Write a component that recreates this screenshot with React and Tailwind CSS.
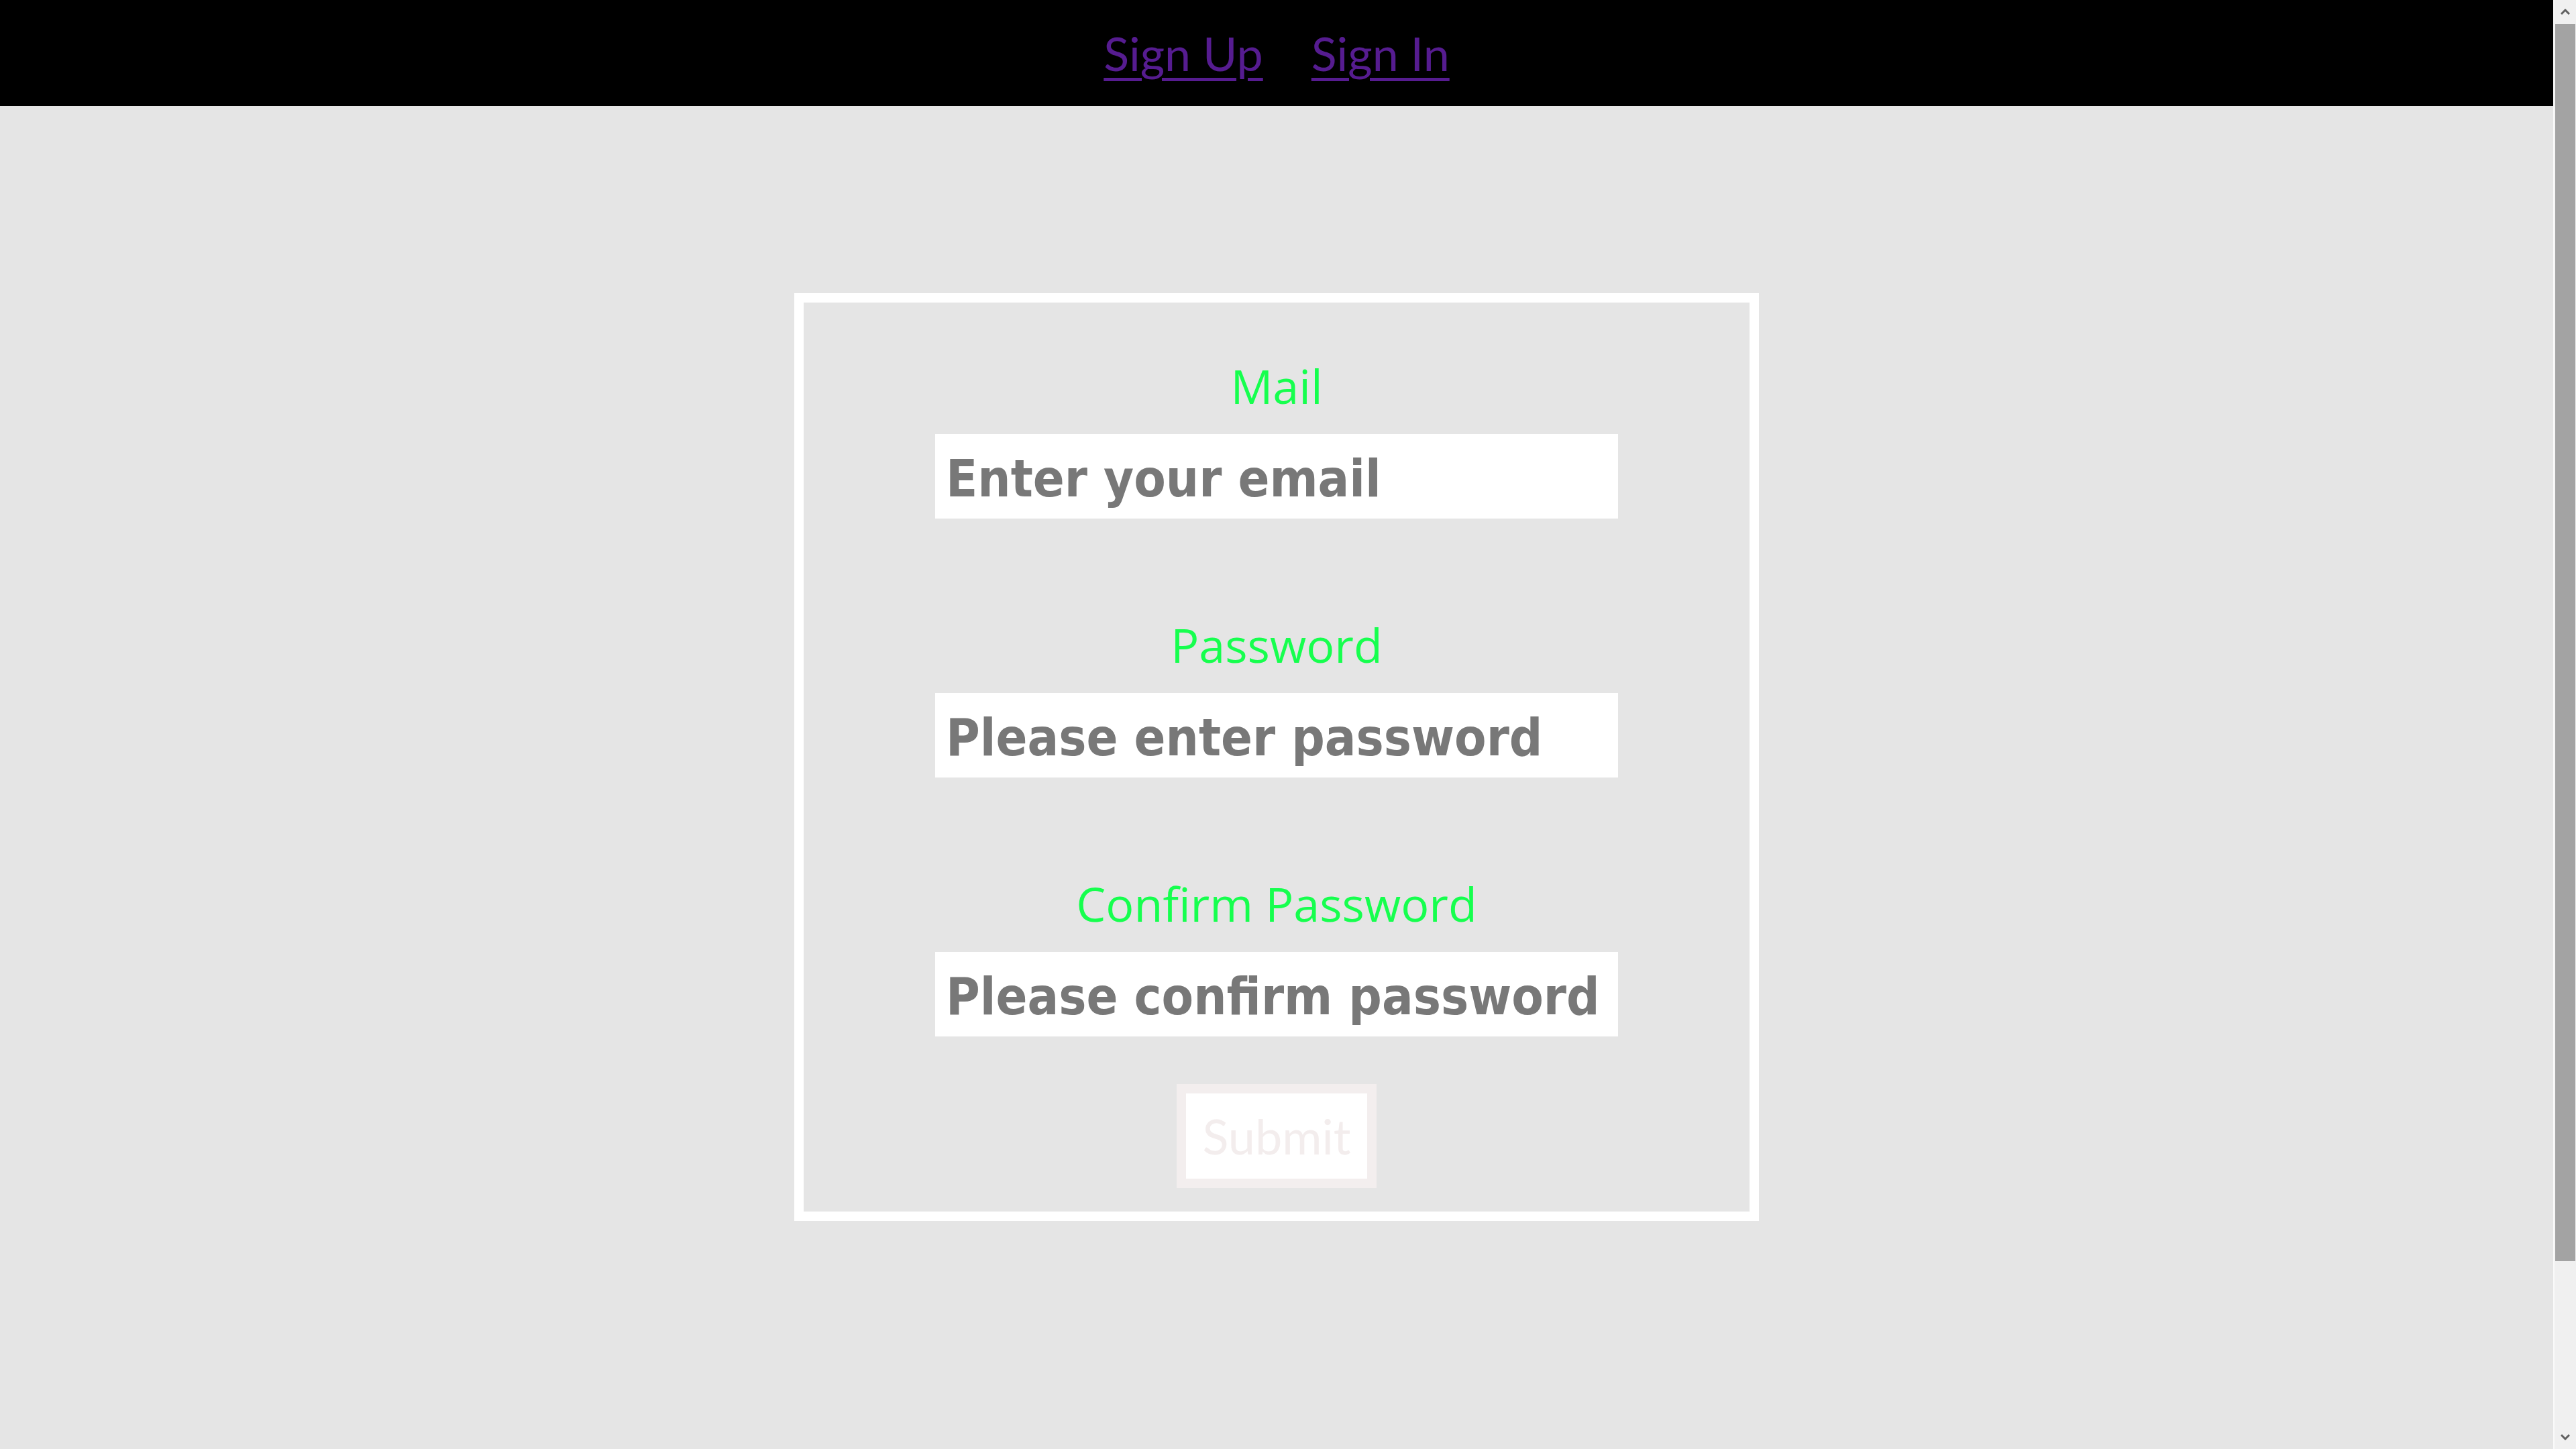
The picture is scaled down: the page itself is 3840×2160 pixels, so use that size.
import React, { useState } from "react";

// Sign up page: black nav bar, grey body, bordered form card

const fields = [
  { id: "mail", label: "Mail", type: "email", placeholder: "Enter your email" },
  { id: "password", label: "Password", type: "password", placeholder: "Please enter password" },
  { id: "confirm", label: "Confirm Password", type: "password", placeholder: "Please confirm password" },
];

const ScrollBar = () => (
  <div className="w-[34px] h-[2160px] flex flex-col bg-[#f0f0f0] border-l-2 border-[#fafafa]">
    <div className="h-[36px] flex items-center justify-center">
      <svg width="14" height="10" viewBox="0 0 14 10">
        <path d="M1 8 L7 2 L13 8" stroke="#606060" strokeWidth="3" fill="none" />
      </svg>
    </div>
    <div className="h-[1844px] mx-[1px] bg-[#a3a3a3]" />
    <div className="flex-1" />
    <div className="h-[36px] flex items-center justify-center">
      <svg width="14" height="10" viewBox="0 0 14 10">
        <path d="M1 2 L7 8 L13 2" stroke="#606060" strokeWidth="3" fill="none" />
      </svg>
    </div>
  </div>
);

export default function App() {
  const [values, setValues] = useState({ mail: "", password: "", confirm: "" });

  const handleChange = (id) => (e) =>
    setValues((prev) => ({ ...prev, [id]: e.target.value }));

  return (
    <div className="flex h-[2160px] overflow-hidden bg-[#e5e5e5]">
      <div className="flex-1 flex flex-col">
        {/* Nav */}
        <nav className="h-[158px] bg-black flex items-center justify-center gap-[72px] font-['Lato',sans-serif] text-[70px] leading-[1.2]">
          <a href="#signup" className="text-[#561c90] underline decoration-[5px] underline-offset-[10px]">
            Sign Up
          </a>
          <a href="#signin" className="text-[#561c90] underline decoration-[5px] underline-offset-[10px]">
            Sign In
          </a>
        </nav>

        {/* Form card */}
        <div className="flex justify-center mt-[279px]">
          <form
            className="w-[1438px] border-[14px] border-white flex flex-col items-center pt-[84px] pb-[35px]"
            onSubmit={(e) => e.preventDefault()}
          >
            {fields.map((field, i) => (
              <div
                key={field.id}
                className={`flex flex-col items-center ${i > 0 ? "mt-[148px]" : ""}`}
              >
                <label
                  htmlFor={field.id}
                  className="h-[80px] leading-[80px] text-[70px] text-[#16ff4e] font-['Open_Sans',sans-serif]"
                >
                  {field.label}
                </label>
                <input
                  id={field.id}
                  type={field.type}
                  value={values[field.id]}
                  onChange={handleChange(field.id)}
                  placeholder={field.placeholder}
                  className="mt-[32px] w-[1018px] h-[126px] bg-white pl-[16px] pt-[6px] outline-none font-['DejaVu_Sans_Condensed','DejaVu_Sans',sans-serif] font-bold text-[77px] text-[#787878] placeholder:text-[#787878]"
                />
              </div>
            ))}

            <button
              type="submit"
              className="mt-[71px] border-[14px] border-[#f3eeee] bg-white h-[155px] px-[24px] font-['Lato',sans-serif] text-[72px] leading-[1.2] text-[#f3eded]"
            >
              Submit
            </button>
          </form>
        </div>
      </div>
      <ScrollBar />
    </div>
  );
}
